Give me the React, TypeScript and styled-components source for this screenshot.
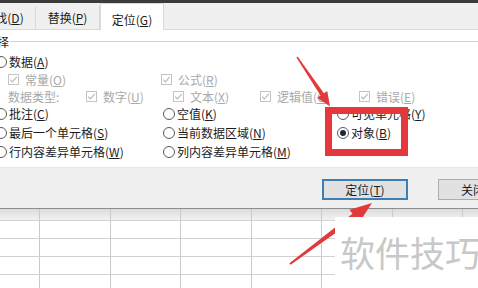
import React from 'react';
import styled, {createGlobalStyle} from "styled-components";

const GlobalStyle = createGlobalStyle`
	html, body {
		margin: 0;
		padding: 0;
		background: #fff;
	}
`

type Opt = {label: string, key: string, checked?: boolean}

const dataTypes: {label: string, key: string, w: number}[] = [
	{label: '数字', key: 'U', w: 87},
	{label: '文本', key: 'X', w: 87},
	{label: '逻辑值', key: 'G', w: 99},
	{label: '错误', key: 'E', w: 0},
]

const radioRows: {h: number, items: Opt[]}[] = [
	{h: 18, items: [{label: '批注', key: 'C'}, {label: '空值', key: 'K'}, {label: '可见单元格', key: 'Y'}]},
	{h: 19, items: [{label: '最后一个单元格', key: 'S'}, {label: '当前数据区域', key: 'N'}, {label: '对象', key: 'B', checked: true}]},
	{h: 19, items: [{label: '行内容差异单元格', key: 'W'}, {label: '列内容差异单元格', key: 'M'}]},
]

const radioWidths = [168, 174, 0]

const Label = ({label, k}: {label: string, k: string}) => (
	<span>{label}(<Key>{k}</Key>)</span>
)

const CheckMark = () => (
	<svg width="11" height="11" viewBox="0 0 11 11">
		<rect x="0.5" y="0.5" width="10" height="10" fill="#fff" stroke="#c4c4c4"/>
		<path d="M2.3 5.6 L4.4 7.8 L8.8 2.9" fill="none" stroke="#b8b8b8" strokeWidth="1.2"/>
	</svg>
)

export default function App() {
	return (
		<Page>
			<GlobalStyle/>
			<TopBar/>
			<TabStrip>
				<Tab $first>查找(<Key>D</Key>)</Tab>
				<Tab>替换(<Key>P</Key>)</Tab>
				<Tab $active>定位(<Key>G</Key>)</Tab>
			</TabStrip>
			<Panel>
				<GroupHeader>
					<span>选择</span>
					<GroupLine/>
				</GroupHeader>
				<Content>
					<Row $h={18}>
						<Item><Radio/><Label label="数据" k="A"/></Item>
					</Row>
					<Row $h={17} $indent>
						<Cell $w={153}><Item $disabled><CheckMark/><Label label="常量" k="O"/></Item></Cell>
						<Cell $w={0}><Item $disabled><CheckMark/><Label label="公式" k="R"/></Item></Cell>
					</Row>
					<Row $h={17} $indent>
						<Cell $w={78}><Item $disabled>数据类型:</Item></Cell>
						{dataTypes.map(t => (
							<Cell key={t.key} $w={t.w}>
								<Item $disabled><CheckMark/><Label label={t.label} k={t.key}/></Item>
							</Cell>
						))}
					</Row>
					{radioRows.map((r, i) => (
						<Row key={i} $h={r.h}>
							{r.items.map((o, j) => (
								<Cell key={o.key} $w={radioWidths[j]}>
									<Item><Radio $checked={o.checked}/><Label label={o.label} k={o.key}/></Item>
								</Cell>
							))}
						</Row>
					))}
				</Content>
			</Panel>
			<ButtonBar>
				<Button $primary>定位(<Key>T</Key>)</Button>
				<Button>关闭(<Key>C</Key>)</Button>
			</ButtonBar>
			<Sheet>
				{Array.from({length: 5}).map((_, r) => (
					<SheetRow key={r} $head={r === 0}>
						{Array.from({length: 8}).map((_, c) => <SheetCell key={c}/>)}
					</SheetRow>
				))}
			</Sheet>
			<Arrows width="478" height="288" viewBox="0 0 478 288">
				<polygon
					points="296.4,57.4 320.5,95.5 317.2,97.8 330,106.5 327.2,91 323.9,93.3 297.6,56.6"
					fill="#e2393b"/>
				<polygon
					points="290.6,264.8 356.1,218.6 359.1,222.6 372,203 349.5,209.8 352.5,213.8 289.4,263.2"
					fill="#e2393b"/>
			</Arrows>
			<RedBox/>
			<Watermark>软件技巧</Watermark>
		</Page>
	)
}

const Page = styled.div`
	position: relative;
	width: 478px;
	height: 288px;
	overflow: hidden;
	background: #fff;
	font-family: "Noto Sans CJK SC", "Noto Sans", sans-serif;
	font-size: 12px;
	color: #1c1c1c;
`

const Key = styled.span`
	text-decoration: underline;
	text-underline-offset: 1px;
`

const TopBar = styled.div`
	height: 3px;
	background: #3b3b3b;
`

const TabStrip = styled.div`
	display: flex;
	align-items: flex-end;
	height: 26px;
	background: #f0f0f0;
	border-bottom: 1px solid #d9d9d9;
`

const Tab = styled.div<{$active?: boolean, $first?: boolean}>`
	box-sizing: border-box;
	width: 64px;
	height: ${p => p.$active ? '27px' : '23px'};
	margin-left: ${p => p.$first ? '-28px' : '0'};
	margin-bottom: ${p => p.$active ? '-1px' : '0'};
	padding-top: ${p => p.$active ? '7px' : '3px'};
	line-height: 17px;
	text-align: center;
	white-space: nowrap;
	background: ${p => p.$active ? '#fff' : '#f0f0f0'};
	border-right: 1px solid #d9d9d9;
	border-left: ${p => p.$active ? '1px solid #d9d9d9' : 'none'};
	border-top: ${p => p.$active ? '1px solid #d9d9d9' : 'none'};
`

const Panel = styled.div`
	box-sizing: border-box;
	height: 137px;
	padding-top: 5px;
	background: #fff;
`

const GroupHeader = styled.div`
	display: flex;
	align-items: center;
	gap: 1px;
	height: 14px;
	margin-left: -15px;
	line-height: 14px;
`

const GroupLine = styled.div`
	flex: 1;
	height: 1px;
	background: #d5d5d5;
	border-bottom: 1px solid #fff;
`

const Content = styled.div`
	margin-left: -5px;
	padding-top: 4px;
`

const Row = styled.div<{$h: number, $indent?: boolean}>`
	display: flex;
	align-items: center;
	height: ${p => p.$h}px;
	padding-left: ${p => p.$indent ? '13px' : '0'};
	white-space: nowrap;
`

const Cell = styled.div<{$w: number}>`
	flex: ${p => p.$w ? `0 0 ${p.$w}px` : '1 0 auto'};
`

const Item = styled.div<{$disabled?: boolean}>`
	display: flex;
	align-items: center;
	gap: ${p => p.$disabled ? '6px' : '2px'};
	line-height: 16px;
	color: ${p => p.$disabled ? '#a9a9a9' : '#1c1c1c'};
`

const Radio = styled.span<{$checked?: boolean}>`
	position: relative;
	box-sizing: border-box;
	width: 12px;
	height: 12px;
	flex: 0 0 12px;
	border: 1px solid #5a5a5a;
	border-radius: 50%;
	background: #fff;

	&::after {
		content: '';
		display: ${p => p.$checked ? 'block' : 'none'};
		position: absolute;
		left: 2px;
		top: 2px;
		width: 6px;
		height: 6px;
		border-radius: 50%;
		background: #1d2a3a;
	}
`

const ButtonBar = styled.div`
	box-sizing: border-box;
	display: flex;
	gap: 30px;
	height: 42px;
	padding: 11px 0 0 322px;
	background: #f0f0f0;
	border-top: 1px solid #e6e6e6;
	border-bottom: 1px solid #8c8c8c;
`

const Button = styled.div<{$primary?: boolean}>`
	box-sizing: border-box;
	flex: 0 0 86px;
	height: 21px;
	line-height: ${p => p.$primary ? '17px' : '19px'};
	text-align: center;
	white-space: nowrap;
	background: #e1e1e1;
	border: ${p => p.$primary ? '2px solid #3f7db4' : '1px solid #adadad'};
`

const Sheet = styled.div`
	margin-left: -30.5px;
`

const SheetRow = styled.div<{$head?: boolean}>`
	display: grid;
	grid-template-columns: repeat(8, 70.5px);
	box-sizing: border-box;
	height: ${p => p.$head ? '12px' : '18px'};
	background: ${p => p.$head ? 'linear-gradient(#dcdcdc, #f2f2f2)' : '#fff'};
	border-bottom: 1px solid #d2d2d2;
`

const SheetCell = styled.div`
	border-right: 1px solid #c9c9c9;
`

const Arrows = styled.svg`
	position: absolute;
	left: 0;
	top: 0;
	pointer-events: none;
`

const RedBox = styled.div`
	position: absolute;
	left: 325px;
	top: 107px;
	width: 83px;
	height: 49px;
	box-sizing: border-box;
	border: 7px solid #e6383c;
`

const Watermark = styled.div`
	position: absolute;
	left: 335px;
	top: 217px;
	right: 0;
	bottom: 0;
	padding: 17px 0 0 5px;
	background: #fff;
	font-size: 35px;
	line-height: 35px;
	color: #c8c8c8;
	white-space: nowrap;
`
